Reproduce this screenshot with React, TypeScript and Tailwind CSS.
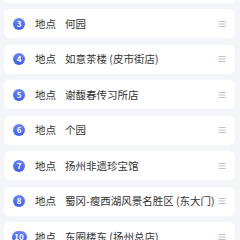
import React from "react";

const places = [
  { no: 3, name: "何园" },
  { no: 4, name: "如意茶楼 (皮市街店)" },
  { no: 5, name: "谢馥春传习所店" },
  { no: 6, name: "个园" },
  { no: 7, name: "扬州非遗珍宝馆" },
  { no: 8, name: "蜀冈-瘦西湖风景名胜区 (东大门)" },
  { no: 10, name: "东圈楼东 (扬州总店)" },
];

function DragHandle() {
  return (
    <svg width="8" height="8" viewBox="0 0 8 8" className="shrink-0">
      <path d="M0.5 1.5H7.5M0.5 4H7.5M0.5 6.5H7.5" stroke="#bcc3cf" strokeWidth="1" />
    </svg>
  );
}

export default function App() {
  return (
    <div
      className="w-[240px] h-[240px] overflow-hidden bg-[#f4f5f8]"
      style={{ fontFamily: '"Noto Sans CJK SC", "Noto Sans", sans-serif' }}
    >
      <div className="flex flex-col gap-[6.5px] pl-1 pr-[5px]">
        {/* bottom of the previous card, scrolled off */}
        <div className="h-[2.5px] shrink-0 rounded-b-md bg-white" />
        {places.map((p) => (
          <div
            key={p.no}
            className="h-[29px] shrink-0 rounded-md bg-white flex items-center pl-[9px] pr-[9px]"
          >
            <span className="w-3 flex justify-center shrink-0">
              <span
                className={`h-3 ${p.no >= 10 ? "min-w-[15px] px-[2px]" : "w-3"} rounded-full bg-gradient-to-b from-[#6a85fb] to-[#3e5cf0] text-white text-[8px] font-bold leading-none flex items-center justify-center shrink-0`}
              >
                {p.no}
              </span>
            </span>
            <span className="ml-[10px] text-[10.5px] text-[#333] w-[30px] shrink-0 leading-[16px]">地点</span>
            <span className="text-[10.5px] text-[#333] flex-1 min-w-0 whitespace-nowrap overflow-hidden leading-[16px]">
              {p.name}
            </span>
            <DragHandle />
          </div>
        ))}
      </div>
    </div>
  );
}
